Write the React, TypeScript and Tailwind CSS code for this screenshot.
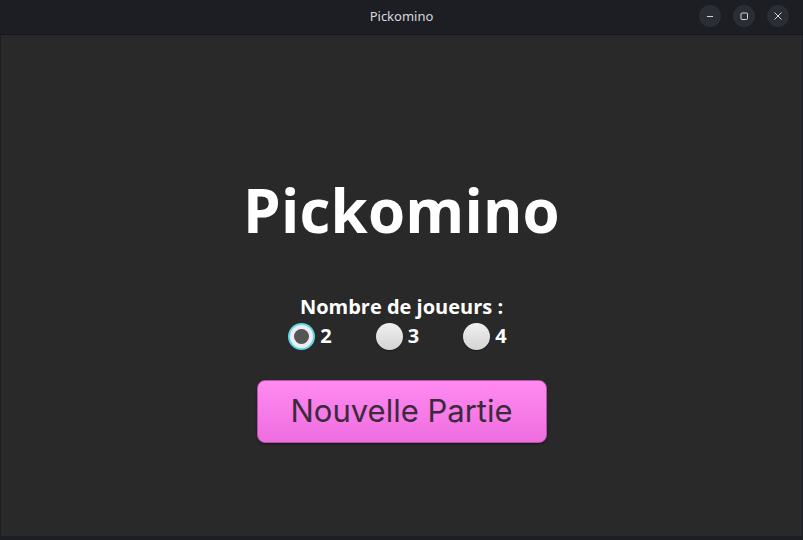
import React, { useState } from 'react';

const options = [2, 3, 4];

const WinButton: React.FC<{ children: React.ReactNode }> = ({ children }) => (
  <div className="w-[22px] h-[22px] rounded-full bg-[#2b2d35] flex items-center justify-center text-[#d5d6da]">
    {children}
  </div>
);

const App: React.FC = () => {
  const [players, setPlayers] = useState(2);

  return (
    <div className="w-[803px] h-[540px] bg-[#1c1e24] flex flex-col overflow-hidden" style={{ fontFamily: '"Open Sans", "Noto Sans", sans-serif' }}>
      {/* Title bar */}
      <header className="h-[35px] shrink-0 relative flex items-center justify-center border-b border-[#15161b]">
        <span className="text-[13px] text-[#d8d9dd]" style={{ fontFamily: '"Noto Sans", sans-serif' }}>Pickomino</span>
        <div className="absolute right-[14px] top-[5px] flex gap-[12px]">
          <WinButton>
            <svg width="10" height="10" viewBox="0 0 10 10"><path d="M2 5.5h6" stroke="currentColor" strokeWidth="1" /></svg>
          </WinButton>
          <WinButton>
            <svg width="10" height="10" viewBox="0 0 10 10"><rect x="2" y="2" width="6.5" height="6.5" rx="1" fill="none" stroke="currentColor" strokeWidth="1" /></svg>
          </WinButton>
          <WinButton>
            <svg width="10" height="10" viewBox="0 0 10 10"><path d="M1.5 1.5l7 7M8.5 1.5l-7 7" stroke="currentColor" strokeWidth="1" /></svg>
          </WinButton>
        </div>
      </header>

      {/* Content */}
      <main className="flex-1 bg-[#292929] mx-[1px] flex flex-col items-center">
        <h1 className="mt-[139px] text-[60px] leading-[72px] font-bold text-white tracking-[0.2px]">Pickomino</h1>

        <p className="mt-[49px] text-[20px] leading-[24px] font-bold text-white">Nombre de joueurs :</p>

        <div className="mt-[3px] flex gap-[44px] pr-[8px]">
          {options.map((n) => (
            <label key={n} className="flex items-center gap-[5px] cursor-pointer" onClick={() => setPlayers(n)}>
              {players === n ? (
                <span className="w-[27px] h-[27px] rounded-full bg-[#5fd8ea] flex items-center justify-center">
                  <span className="w-[23px] h-[23px] rounded-full bg-[#eeeeee] flex items-center justify-center">
                    <span className="w-[15px] h-[15px] rounded-full bg-[#555555]" />
                  </span>
                </span>
              ) : (
                <span className="w-[27px] h-[27px] rounded-full bg-gradient-to-b from-[#f0f0f0] to-[#d4d4d4] shadow-[0_1px_1px_rgba(0,0,0,0.4)]" />
              )}
              <span className="text-[20px] leading-[28px] font-bold text-white">{n}</span>
            </label>
          ))}
        </div>

        <button
          className="mt-[30px] w-[290px] h-[63px] rounded-[8px] border border-[#b553a8] bg-gradient-to-b from-[#ff8af1] to-[#ee6ddf] text-[#3b2a3b] text-[31px] flex items-center justify-center shadow-[0_1px_2px_rgba(0,0,0,0.5)]"
          style={{ fontFamily: 'Inter, "Noto Sans", sans-serif' }}
        >
          Nouvelle Partie
        </button>
      </main>
      <div className="h-[4px] shrink-0 bg-[#1c1e24]" />
    </div>
  );
};

export default App;
